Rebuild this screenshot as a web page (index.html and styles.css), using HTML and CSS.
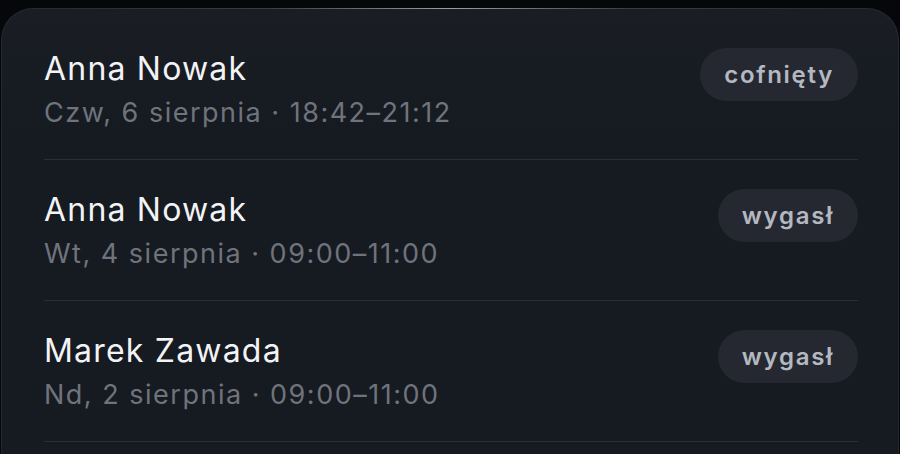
FILE: index.html
```html
<!DOCTYPE html>
<html lang="pl">
<head>
    <meta charset="UTF-8">
    <title>Rezerwacje</title>
    <link rel="stylesheet" href="styles.css">
</head>
<body>
<div class="card">
    <div class="row">
        <div class="info">
            <div class="name">Anna Nowak</div>
            <div class="when">Czw, 6 sierpnia · 18:42–21:12</div>
        </div>
        <span class="badge">cofnięty</span>
    </div>
    <div class="row">
        <div class="info">
            <div class="name">Anna Nowak</div>
            <div class="when">Wt, 4 sierpnia · 09:00–11:00</div>
        </div>
        <span class="badge">wygasł</span>
    </div>
    <div class="row">
        <div class="info">
            <div class="name">Marek Zawada</div>
            <div class="when">Nd, 2 sierpnia · 09:00–11:00</div>
        </div>
        <span class="badge">wygasł</span>
    </div>
</div>
</body>
</html>
```

FILE: styles.css
```css
html{
    margin:0px;
    padding:0px;
    background:#05070b;
}
body{
    margin:0px;
    padding:0px;
    height:454px;
    overflow:hidden;
    font-family:Inter, "Noto Sans", sans-serif;
}
.card{
    margin:8px 1px 0px 1px;
    padding:10px 40px 40px 42px;
    border:1px solid transparent;
    border-radius:32px;
    background:
        linear-gradient(#1a1d24, #161a21 120px) padding-box,
        linear-gradient(90deg, #24272d, #3a3d43 30%, #9a9da3 50%, #3a3d43 70%, #24272d) border-box;
}
.row{
    display:flex;
    justify-content:space-between;
    align-items:flex-start;
    height:140px;
    border-bottom:1px solid #2a2e36;
}
.info{
    padding-top:30px;
}
.name{
    color:#f2f3f5;
    font-size:32px;
    line-height:40px;
    letter-spacing:1.2px;
}
.when{
    color:#6f737c;
    font-size:27px;
    line-height:34px;
    margin-top:7px;
    letter-spacing:1.5px;
}
.badge{
    margin-top:29px;
    height:53px;
    line-height:53px;
    padding:0px 24px;
    border-radius:27px;
    background:#252830;
    color:#b4b8c1;
    font-size:24px;
    font-weight:600;
    letter-spacing:1.7px;
}
```
